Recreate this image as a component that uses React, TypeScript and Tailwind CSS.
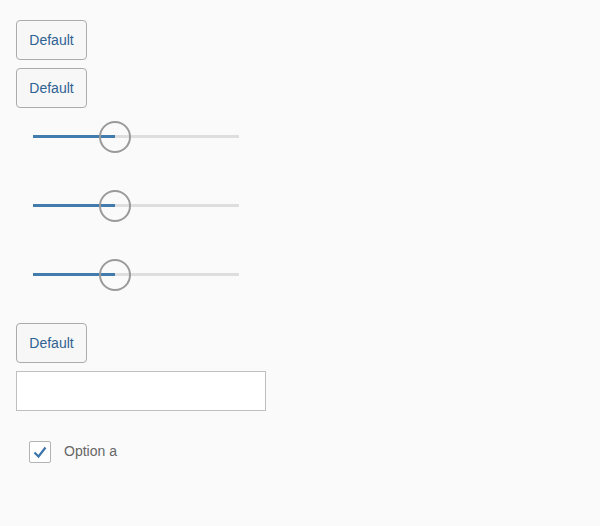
import { useState } from "react";

const Btn = ({ label }: { label: string }) => (
  <button className="h-10 w-[71px] rounded-[4px] border border-[#ababab] bg-[#f7f7f7] text-[14px] text-[#2f6293]">
    {label}
  </button>
);

const Slider = ({ value }: { value: number }) => (
  <div className="relative ml-[17px] h-8 w-[206px]">
    <div className="absolute left-0 right-0 top-[15px] h-[3px] bg-[#dedede]" />
    <div className="absolute left-0 top-[15px] h-[3px] bg-[#427cac]" style={{ width: `${value}%` }} />
    <div
      className="absolute top-[0.5px] h-8 w-8 -translate-x-1/2 rounded-full border-2 border-[#9a9a9a]"
      style={{ left: `${value}%` }}
    />
  </div>
);

export default function App() {
  const [checked, setChecked] = useState(true);

  return (
    <div className="min-h-[526px] bg-[#fafafa] px-4 pt-5 font-['Liberation_Sans',Arial,sans-serif]">
      <div className="flex flex-col items-start gap-2">
        <Btn label="Default" />
        <Btn label="Default" />
      </div>

      {/* sliders */}
      <div className="mt-3 flex flex-col gap-[37px]">
        <Slider value={40} />
        <Slider value={40} />
        <Slider value={40} />
      </div>

      <div className="mt-[33px] flex flex-col items-start gap-2">
        <Btn label="Default" />
        <input className="h-10 w-[250px] border border-[#bfbfbf] bg-white px-2 text-[14px] outline-none" />
      </div>

      <label className="ml-[13px] mt-[30px] flex cursor-pointer items-center gap-[13px]">
        <span
          onClick={() => setChecked(!checked)}
          className="flex h-[22px] w-[22px] items-center justify-center rounded-[2px] border border-[#b3b3b3] bg-white"
        >
          {checked && (
            <svg width="16" height="16" viewBox="0 0 16 16">
              <polyline points="2.5,8.5 6.5,12.5 13.5,3.5" fill="none" stroke="#3d75aa" strokeWidth="2.2" />
            </svg>
          )}
        </span>
        <span className="-mt-[2px] text-[14px] text-[#666]">Option a</span>
      </label>
    </div>
  );
}
